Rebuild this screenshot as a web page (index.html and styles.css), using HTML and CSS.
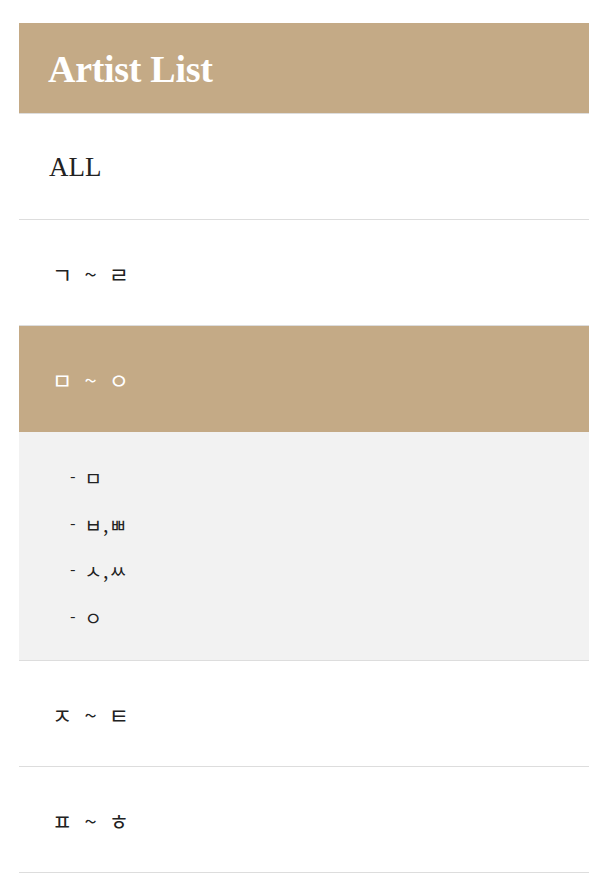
FILE: index.html
```html
<!DOCTYPE html>
<html lang="ko">
<head>
<meta charset="utf-8">
<title>Artist List</title>
<link rel="stylesheet" href="styles.css">
</head>
<body>
<div class="panel">
  <h1 class="title">Artist List</h1>
  <ul class="menu">
    <li class="item all">ALL</li>
    <li class="item">ㄱ ~ ㄹ</li>
    <li class="item active">ㅁ ~ ㅇ</li>
    <li class="sub">
      <ul class="sublist">
        <li>ㅁ</li>
        <li>ㅂ,ㅃ</li>
        <li>ㅅ,ㅆ</li>
        <li>ㅇ</li>
      </ul>
    </li>
    <li class="item">ㅈ ~ ㅌ</li>
    <li class="item">ㅍ ~ ㅎ</li>
  </ul>
</div>
</body>
</html>
```
FILE: styles.css
```css
html, body { margin: 0; padding: 0; background: #fff; }
body { padding: 23px 25px 0 19px; }
.panel { width: 570px; }
.title {
  margin: 0;
  height: 91px;
  box-sizing: border-box;
  background: #c4aa86;
  color: #fff;
  font-family: "Liberation Serif", serif;
  font-weight: bold;
  font-size: 38px;
  letter-spacing: -0.3px;
  padding-left: 29px;
  padding-top: 2px;
  display: flex;
  align-items: center;
  border-bottom: 1px solid #ddd;
}
.menu { list-style: none; margin: 0; padding: 0; }
.item {
  height: 106px;
  box-sizing: border-box;
  display: flex;
  align-items: center;
  padding-left: 33px;
  font-family: "Noto Sans CJK KR", sans-serif;
  font-size: 22px;
  letter-spacing: 3px;
  color: #222;
  border-bottom: 1px solid #ddd;
}
.item.all {
  font-family: "Liberation Serif", serif;
  font-size: 27px;
  letter-spacing: 0;
  padding-left: 30px;
  padding-top: 2px;
}
.item.active {
  background: #c4aa86;
  color: #fff;
  border-bottom: none;
}
.sub { background: #f2f2f2; border-bottom: 1px solid #ddd; }
.sublist {
  list-style: none;
  margin: 0;
  padding: 30px 0 27px 51px;
  display: flex;
  flex-direction: column;
  gap: 15px;
}
.sublist li {
  font-family: "Noto Sans CJK KR", sans-serif;
  font-size: 19px;
  color: #222;
  height: 31.5px;
  line-height: 31.5px;
  display: flex;
  align-items: center;
  letter-spacing: 1px;
}
.sublist li::before { content: "-"; margin-right: 8px; font-size: 16px; }
```
